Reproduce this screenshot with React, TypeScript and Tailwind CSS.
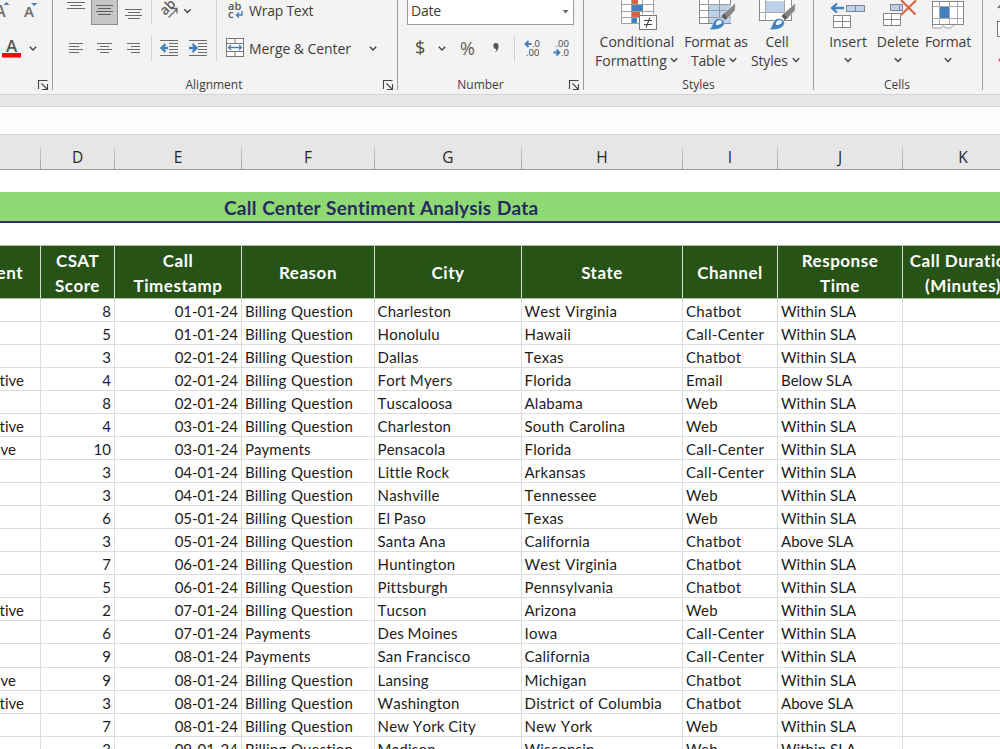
import type { ReactNode } from "react";

type Tile = { x: number; y: number; w: number; h: number; children?: ReactNode };

/** Icon tile whose contents are drawn in ribbon coordinates. */
function Icon({ x, y, w, h, children }: Tile) {
  return (
    <svg width={w} height={h} viewBox={`${x} ${y} ${w} ${h}`} className="block shrink-0" fill="none">
      {children}
    </svg>
  );
}

function Lines({ rows, c = "#6b6b6b" }: { rows: [number, number, number][]; c?: string }) {
  return (
    <g stroke={c} strokeWidth="1">
      {rows.map(([y, a, b]) => (
        <path key={y} d={`M${a} ${y}H${b}`} />
      ))}
    </g>
  );
}

function Chevron({ x, y }: { x: number; y: number }) {
  return <path d={`M${x - 3.2} ${y - 1.7}l3.200 3.200l3.200 -3.200`} stroke="#444" strokeWidth="1.400" />;
}

function Launcher({ x }: { x: number }) {
  return (
    <g stroke="#444" strokeWidth="1.1">
      <path d={`M${x + 0.5} 89V80.5H${x + 9.5}`} />
      <path d={`M${x + 3.5} 83.5L${x + 9} 89M${x + 9.5} 84V89.5H${x + 4}`} />
    </g>
  );
}

function Rule() {
  return <div className="h-[90px] w-px shrink-0 bg-[#9d9d9d]" />;
}

function Brush({ x }: { x: number }) {
  return (
    <g>
      <path d={`M${x + 26.500} 3L${x + 14} 14L${x + 18.500} 18.500L${x + 26} 10.500Z`} fill="#858585" stroke="#f3f3f3" strokeWidth="0.600" />
      <path d={`M${x + 12.500} 16L${x + 16} 20L${x + 18.500} 18L${x + 15} 13.500Z`} fill="#5a5a5a" />
      <path
        d={`M${x} 29.5C${x + 4} 28 ${x + 3} 19 ${x + 9.5} 18.5C${x + 14} 18.5 ${x + 16.5} 22 ${x + 15} 25C${x + 11.5} 30 ${x + 5} 30 ${x} 29.5Z`}
        fill="#4380bd"
        stroke="#f3f3f3"
        strokeWidth="0.600"
      />
      <path d={`M${x + 7} 25C${x + 6} 21 ${x + 10} 19.5 ${x + 12.5} 20.5C${x + 14} 23.5 ${x + 11} 25 ${x + 7} 25Z`} fill="#eef4fa" />
    </g>
  );
}

function Ribbon() {
  return (
    <div className="flex h-[94px] w-[1040px] shrink-0 bg-[#f3f3f3] font-['Open_Sans','Noto_Sans',sans-serif] text-[14px] text-[#3d3d3d]">
      <div className="flex w-[52px] shrink-0 flex-col">
        <Icon x={0} y={0} w={52} h={30}>
          <text x="-5" y="17" fontSize="16" fontFamily="Open Sans" fontWeight="600" fill="#6a6a6a">A</text>
          <text x="24" y="17" fontSize="15" fontFamily="Open Sans" fontWeight="600" fill="#6a6a6a">A</text>
          <path d="M3.5 5L6.5 2L9.5 5Z" fill="#4380bd" />
          <path d="M31 3H37.500L34.200 6Z" fill="#4380bd" />
        </Icon>
        <Icon x={0} y={30} w={52} h={46}>
          <text x="6" y="52" fontSize="17" fontFamily="Open Sans" fontWeight="600" fill="#555">A</text>
          <rect x="2" y="53" width="19" height="4.500" fill="#fb0505" />
          <Chevron x={33} y={48.500} />
        </Icon>
        <Icon x={0} y={76} w={52} h={18}>
          <Launcher x={38} />
        </Icon>
      </div>
      <Rule />

      <div className="flex w-[344px] shrink-0 flex-col">
        <div className="flex h-[76px]">
          <div className="w-[163px] shrink-0">
            <div className="flex h-[30px]">
              <Icon x={53} y={0} w={38} h={30}>
                <Lines rows={[[2.5, 67, 85], [5.5, 70, 82], [8.5, 67, 85]]} />
              </Icon>
              <div className="h-[25px] w-[27px] shrink-0 border border-t-0 border-[#8e8e8e] bg-[#c6c6c6]">
                <Icon x={92} y={0} w={25} h={24}>
                  <Lines c="#5f5f5f" rows={[[5.5, 96, 113], [8.5, 98, 111], [11.5, 96, 113], [14.5, 98, 111]]} />
                </Icon>
              </div>
              <Icon x={118} y={0} w={33} h={30}>
                <Lines rows={[[9.5, 125, 142], [12.5, 128, 140], [15.5, 125, 142], [18.5, 128, 140]]} />
              </Icon>
              <div className="h-[24px] w-px shrink-0 bg-[#d2d2d2]" />
              <Icon x={152} y={0} w={64} h={30}>
                <text transform="translate(165 16) rotate(-45)" fontSize="13.500" fontFamily="Open Sans" fontWeight="600" fill="#5c5c5c">ab</text>
                <path d="M168.500 17.500L177 9M172 8.500H177V13.500" stroke="#666" strokeWidth="1.3" />
                <Chevron x={187.500} y={11} />
              </Icon>
            </div>
            <div className="flex h-[46px]">
              <Icon x={53} y={30} w={98} h={46}>
                <Lines rows={[[43.5, 69, 83], [46.5, 69, 79], [49.5, 69, 83], [52.5, 69, 79]]} />
                <Lines rows={[[43.5, 97, 112], [46.5, 100, 109], [49.5, 97, 112], [52.5, 100, 109]]} />
                <Lines rows={[[43.5, 127, 140], [46.5, 131, 140], [49.5, 127, 140], [52.5, 131, 140]]} />
              </Icon>
              <div className="mt-[6px] h-[26px] w-px shrink-0 bg-[#d2d2d2]" />
              <Icon x={152} y={30} w={64} h={46}>
                <Lines rows={[[40.5, 160, 178], [43.5, 169, 178], [46.5, 169, 178], [49.5, 169, 178], [52.5, 169, 178], [55.5, 160, 178]]} />
                <path d="M168 48H162M165.500 44L161.500 48L165.500 52" stroke="#4380bd" strokeWidth="2.400" />
                <Lines rows={[[40.5, 189, 207], [43.5, 198, 207], [46.5, 198, 207], [49.5, 198, 207], [52.5, 198, 207], [55.5, 189, 207]]} />
                <path d="M189 48H196M192.500 44L196.500 48L192.500 52" stroke="#4380bd" strokeWidth="2.400" />
              </Icon>
            </div>
          </div>
          <div className="h-[62px] w-px shrink-0 bg-[#d2d2d2]" />
          <div className="flex w-[180px] shrink-0 flex-col">
            <div className="flex h-[30px]">
              <Icon x={217} y={0} w={32} h={30}>
                <text x="228" y="10" fontSize="11" fontFamily="Open Sans" fontWeight="600" fill="#555">ab</text>
                <text x="228" y="18" fontSize="11" fontFamily="Open Sans" fontWeight="600" fill="#555">c</text>
                <path d="M242 11V15H236.500M239 12.500L236.500 15L239 17.500" stroke="#4380bd" strokeWidth="1.4" />
              </Icon>
              <span className="leading-[22px] whitespace-nowrap [letter-spacing:-0.25px]">Wrap Text</span>
            </div>
            <div className="flex h-[46px]">
              <Icon x={217} y={30} w={32} h={46}>
                <rect x="226.500" y="38.500" width="17" height="18" fill="#fff" stroke="#777" />
                <path d="M226 43.500H244M226 51.500H244M235 38V43M235 52V57" stroke="#777" />
                <path d="M228.500 47.500H241.500M231 45L228.500 47.500L231 50M239 45L241.500 47.500L239 50" stroke="#4380bd" strokeWidth="1.3" />
              </Icon>
              <span className="w-[104px] shrink-0 leading-[37px] whitespace-nowrap [letter-spacing:-0.07px]">Merge &amp; Center</span>
              <Icon x={353} y={30} w={44} h={46}>
                <Chevron x={373} y={48.500} />
              </Icon>
            </div>
          </div>
        </div>
        <div className="flex h-[18px] text-[12px] leading-[18px]">
          <span className="w-[322px] shrink-0 text-center">Alignment</span>
          <Icon x={375} y={76} w={22} h={18}>
            <Launcher x={383} />
          </Icon>
        </div>
      </div>
      <Rule />

      <div className="flex w-[185px] shrink-0 flex-col">
        <div className="ml-[9px] flex h-[25px] w-[167px] border border-t-0 border-[#9a9a9a] bg-white pl-[3px]">
          <span className="w-[150px] leading-[22px] [letter-spacing:-0.2px]">Date</span>
          <Icon x={561} y={0} w={12} h={24}>
            <path d="M562.500 10H568.500L565.500 13.500Z" fill="#666" />
          </Icon>
        </div>
        <Icon x={398} y={25} w={185} h={51}>
          <text x="415" y="54" fontSize="18" fontFamily="Open Sans" fill="#4d4d4d">$</text>
          <Chevron x={442} y={48.500} />
          <text x="460" y="54.500" fontSize="18" fontFamily="Open Sans" fill="#5d5d5d">%</text>
          <path d="M493.500 46.500a2.600 2.600 0 1 1 5 -0.500c0.300 3 -1 5 -3.500 6.500c1 -1.500 1.500 -2.500 1.300 -3.500c-1.500 0.300 -2.600 -0.800 -2.800 -2.500Z" fill="#555" />
          <path d="M514.500 36V62" stroke="#d2d2d2" />
          <path d="M531.500 44H526M528.500 41L525.500 44L528.500 47" stroke="#4380bd" strokeWidth="1.8" />
          <text x="532" y="47" fontSize="9.500" fontFamily="Open Sans" fill="#444">.0</text>
          <text x="526" y="56" fontSize="9.500" fontFamily="Open Sans" fill="#444">.00</text>
          <text x="555.500" y="47" fontSize="9.500" fontFamily="Open Sans" fill="#444">.00</text>
          <path d="M553.500 52.500H559M556.500 49.500L559.500 52.500L556.500 55.500" stroke="#4380bd" strokeWidth="1.8" />
          <text x="561" y="56" fontSize="9.500" fontFamily="Open Sans" fill="#444">.0</text>
        </Icon>
        <div className="flex h-[18px] text-[12px] leading-[18px]">
          <span className="w-[165px] shrink-0 text-center">Number</span>
          <Icon x={563} y={76} w={20} h={18}>
            <Launcher x={569} />
          </Icon>
        </div>
      </div>
      <Rule />

      <div className="flex w-[229px] shrink-0 flex-col">
        <Icon x={584} y={0} w={229} h={32}>
          <rect x="622" y="0" width="31" height="15" fill="#fff" />
          <rect x="622" y="15" width="18" height="8" fill="#fff" />
          <path d="M621.500 0V23.500H640M631.500 0V23M642.500 0V14M653.500 0V14M621.500 4.500H653.500M621.500 11.500H653.500M621.500 17.500H639" stroke="#a0a0a0" />
          <rect x="632" y="0" width="6" height="4" fill="#d9623f" />
          <rect x="632" y="5" width="11" height="6" fill="#4380bd" />
          <rect x="632" y="12" width="8" height="5" fill="#d9623f" />
          <rect x="632" y="18" width="5" height="5" fill="#4380bd" />
          <rect x="639.500" y="15.500" width="17" height="14" fill="#fff" stroke="#777" />
          <path d="M644 20.500H652M644 24.500H652M650 17.500L646 27.500" stroke="#444" strokeWidth="1.1" />

          <rect x="699.500" y="-5" width="31" height="28.500" fill="#fff" stroke="#888" />
          <rect x="709" y="4" width="22" height="19" fill="#bdd1ea" />
          <path d="M708.500 0V23M719.500 0V23M700 4.500H731M700 10.500H731M700 17.500H731" stroke="#999" />
          <Brush x={709} />

          <rect x="759.500" y="-5" width="32" height="25.500" fill="#fff" stroke="#888" />
          <path d="M765.500 0V20M784.500 0V20M760 12.500H791" stroke="#aaa" />
          <rect x="766" y="1" width="18" height="11" fill="#bdd1ea" />
          <Brush x={769} />
        </Icon>
        <div className="flex h-[44px] text-center leading-[19px] whitespace-nowrap">
          <div className="ml-[8px] w-[90px]">
            <div>Conditional</div>
            <div className="flex">
              <span className="w-[75px] pl-[3px] text-left">Formatting</span>
              <Icon x={0} y={0} w={14} h={18}><Chevron x={7} y={9} /></Icon>
            </div>
          </div>
          <div className="w-[68px] [letter-spacing:-0.2px]">
            <div>Format as</div>
            <div className="flex">
              <span className="w-[43px] pl-[9px] text-left">Table</span>
              <Icon x={0} y={0} w={14} h={18}><Chevron x={8} y={9} /></Icon>
            </div>
          </div>
          <div className="w-[54px] [letter-spacing:-0.15px]">
            <div>Cell</div>
            <div className="flex">
              <span className="w-[39px] pl-px text-left">Styles</span>
              <Icon x={0} y={0} w={14} h={18}><Chevron x={7} y={9} /></Icon>
            </div>
          </div>
        </div>
        <div className="h-[18px] text-center text-[12px] leading-[18px]">Styles</div>
      </div>
      <Rule />

      <div className="flex w-[168px] shrink-0 flex-col">
        <Icon x={814} y={0} w={168} h={32}>
          <path d="M833 -0.500H851M883 -0.500H901" stroke="#777" />
          <path d="M844 8H832M837 3.500L832 8L837 12.500" stroke="#4380bd" strokeWidth="2.300" />
          <rect x="846.500" y="5.500" width="18" height="6" fill="#bdd1ea" stroke="#7b8794" />
          <path d="M855.500 5V12" stroke="#7b8794" />
          <rect x="833.500" y="15.500" width="17" height="12" fill="#fff" stroke="#888" />
          <path d="M842.500 15V28M833 21.500H851" stroke="#888" />
          <rect x="890.500" y="4.500" width="12" height="6" fill="#bdd1ea" stroke="#7b8794" />
          <path d="M899.500 4V11" stroke="#7b8794" />
          <rect x="883.500" y="13.500" width="17" height="12" fill="#fff" stroke="#888" />
          <path d="M891.500 13V26M883 19.500H901" stroke="#888" />
          <path d="M901 0L915.500 14.500M916 0.500L901 15" stroke="#dd6543" strokeWidth="2.200" />
          <rect x="932.500" y="1.500" width="31" height="23" fill="#fff" stroke="#888" />
          <path d="M939.500 2V24M949.500 2V24M957.500 2V24M933 6.500H963M933 18.500H963" stroke="#aaa" />
          <rect x="940" y="7" width="9" height="11" fill="#4380bd" />
          <path d="M932.500 25V28H941L943.500 25.500L945.500 28H950.500L954 25" stroke="#999" fill="#fff" />
        </Icon>
        <div className="flex h-[44px] text-center leading-[19px] whitespace-nowrap">
          <div className="ml-[9px] w-[50px]">
            <div>Insert</div>
            <Icon x={0} y={0} w={50} h={18}><Chevron x={25} y={9} /></Icon>
          </div>
          <div className="w-[50px]">
            <div>Delete</div>
            <Icon x={0} y={0} w={50} h={18}><Chevron x={25} y={9} /></Icon>
          </div>
          <div className="w-[50px] [letter-spacing:-0.2px]">
            <div>Format</div>
            <Icon x={0} y={0} w={50} h={18}><Chevron x={25} y={9} /></Icon>
          </div>
        </div>
        <div className="h-[18px] pr-[2px] text-center text-[12px] leading-[18px]">Cells</div>
      </div>
      <Rule />
      <Icon x={983} y={0} w={17} h={76}>
        <path d="M998 8L1001 5" stroke="#555" strokeWidth="1.5" />
        <rect x="997.500" y="21.500" width="10" height="15" fill="#fff" stroke="#777" />
        <path d="M998 60L1002 56V64Z" fill="#e0567a" />
      </Icon>
    </div>
  );
}

const columns: { letter: string; title: string[]; cell: string }[] = [
  { letter: "D", title: ["CSAT", "Score"], cell: "justify-end pr-[3px]" },
  { letter: "E", title: ["Call", "Timestamp"], cell: "justify-end pr-[3px]" },
  { letter: "F", title: ["Reason"], cell: "pl-[3px] [letter-spacing:0.2px] [word-spacing:0.5px]" },
  { letter: "G", title: ["City"], cell: "pl-[2.5px] [font-kerning:none] [letter-spacing:0.22px] [word-spacing:-0.5px]" },
  { letter: "H", title: ["State"], cell: "pl-[2.5px] [font-kerning:none] [letter-spacing:0.22px] [word-spacing:0.5px]" },
  { letter: "I", title: ["Channel"], cell: "pl-[3px] [letter-spacing:0.3px]" },
  { letter: "J", title: ["Response", "Time"], cell: "pl-[3px] [letter-spacing:0.05px]" },
  { letter: "K", title: ["Call Duration", "(Minutes)"], cell: "" },
];

const grid = "grid w-[1024px] grid-cols-[41px_74px_127px_133px_147px_161px_95px_125px_121px]";

const B = "Billing Question";
const P = "Payments";
const W = "Within SLA";

const rows: string[][] = [
  ["", "8", "01-01-24", B, "Charleston", "West Virginia", "Chatbot", W],
  ["", "5", "01-01-24", B, "Honolulu", "Hawaii", "Call-Center", W],
  ["", "3", "02-01-24", B, "Dallas", "Texas", "Chatbot", W],
  ["tive", "4", "02-01-24", B, "Fort Myers", "Florida", "Email", "Below SLA"],
  ["", "8", "02-01-24", B, "Tuscaloosa", "Alabama", "Web", W],
  ["tive", "4", "03-01-24", B, "Charleston", "South Carolina", "Web", W],
  ["ve", "10", "03-01-24", P, "Pensacola", "Florida", "Call-Center", W],
  ["", "3", "04-01-24", B, "Little Rock", "Arkansas", "Call-Center", W],
  ["", "3", "04-01-24", B, "Nashville", "Tennessee", "Web", W],
  ["", "6", "05-01-24", B, "El Paso", "Texas", "Web", W],
  ["", "3", "05-01-24", B, "Santa Ana", "California", "Chatbot", "Above SLA"],
  ["", "7", "06-01-24", B, "Huntington", "West Virginia", "Chatbot", W],
  ["", "5", "06-01-24", B, "Pittsburgh", "Pennsylvania", "Chatbot", W],
  ["tive", "2", "07-01-24", B, "Tucson", "Arizona", "Web", W],
  ["", "6", "07-01-24", P, "Des Moines", "Iowa", "Call-Center", W],
  ["", "9", "08-01-24", P, "San Francisco", "California", "Call-Center", W],
  ["ve", "9", "08-01-24", B, "Lansing", "Michigan", "Chatbot", W],
  ["tive", "3", "08-01-24", B, "Washington", "District of Columbia", "Chatbot", "Above SLA"],
  ["", "7", "08-01-24", B, "New York City", "New York", "Web", W],
  ["", "3", "09-01-24", B, "Madison", "Wisconsin", "Web", W],
];

export default function App() {
  return (
    <div className="flex h-[749px] w-[1000px] flex-col overflow-hidden bg-white font-[Lato,'Open_Sans',sans-serif] text-[#1c1c1c] [font-variant-ligatures:none]">
      <Ribbon />
      <div className="h-[13px] shrink-0 border-y border-[#d4d4d4] bg-[#e6e6e6]" />
      <div className="h-[27px] shrink-0 bg-[#fdfdfd]" />
      <div className="h-[36px] shrink-0 border-t border-b border-t-[#d4d4d4] border-b-[#9b9b9b] bg-[#e6e6e6] pt-[11px]">
        <div className={`${grid} h-[23px] text-center font-['Open_Sans',sans-serif] text-[15.5px] leading-[23px] text-[#262626]`}>
          <div className="bg-linear-to-b from-[#d0d0d0] to-[#a0a0a0] pr-px">
            <div className="h-full bg-[#e6e6e6]" />
          </div>
          {columns.map((c) => (
            <div key={c.letter} className="bg-linear-to-b from-[#d0d0d0] to-[#a0a0a0] pr-px">
              <div className="h-[23px] bg-[#e6e6e6]">{c.letter}</div>
            </div>
          ))}
        </div>
      </div>
      <div className="mt-[22px] h-[31px] shrink-0 border-b-2 border-[#2c2f6b] bg-[#8ed973] pl-[224px] text-[19px] leading-[32px] font-bold whitespace-nowrap text-[#262a5f] [letter-spacing:0.24px] [word-spacing:0.7px]">
        Call Center Sentiment Analysis Data
      </div>
      <div className={`${grid} mt-[22px] h-[54px] shrink-0 border-y border-[#a9bba0] bg-[#275317] text-center text-[17px] leading-[25px] font-bold text-white [letter-spacing:0.52px]`}>
        <div className="flex items-center justify-end border-r border-[#d5dcd2] pr-[17px]">ent</div>
        {columns.map((c) => (
          <div key={c.letter} className="flex flex-col justify-center border-r border-[#d5dcd2] pt-px whitespace-nowrap">
            {c.title.map((t) => (
              <div key={t}>{t}</div>
            ))}
          </div>
        ))}
      </div>
      {rows.map((row, i) => (
        <div key={i} className={`${grid} h-[23.040px] shrink-0 text-[15px] leading-[24px] whitespace-nowrap`}>
          <div className={`flex h-[23.040px] justify-end border-r border-b border-[#dcdcdc] ${row[0] === "tive" ? "pr-[16px]" : "pr-[24px]"}`}>{row[0]}</div>
          {columns.map((c, j) => (
            <div key={c.letter} className={`flex h-[23.040px] border-r border-b border-[#dcdcdc] ${c.cell}`}>
              {row[j + 1]}
            </div>
          ))}
        </div>
      ))}
    </div>
  );
}
